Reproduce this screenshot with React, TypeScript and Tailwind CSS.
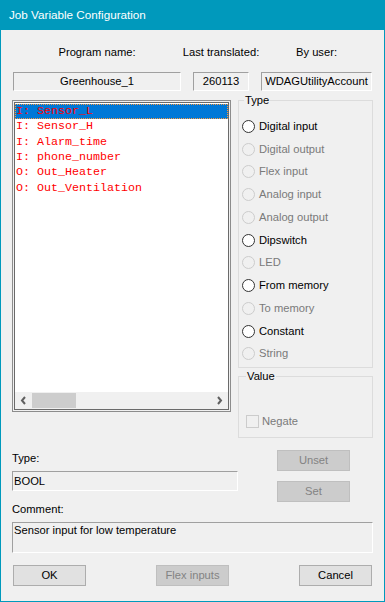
const items = [
  { label: "I: Sensor_L", selected: true },
  { label: "I: Sensor_H" },
  { label: "I: Alarm_time" },
  { label: "I: phone_number" },
  { label: "O: Out_Heater" },
  { label: "O: Out_Ventilation" },
];

const types = [
  { label: "Digital input", enabled: true },
  { label: "Digital output" },
  { label: "Flex input" },
  { label: "Analog input" },
  { label: "Analog output" },
  { label: "Dipswitch", enabled: true },
  { label: "LED" },
  { label: "From memory", enabled: true },
  { label: "To memory" },
  { label: "Constant", enabled: true },
  { label: "String" },
];

function Field({ width, children, center }: { width: string; children: React.ReactNode; center?: boolean }) {
  return (
    <div
      className={`${width} h-[19px] flex items-center border border-[#a0a0a0] border-r-white border-b-white leading-none ${
        center ? "justify-center" : "pl-px"
      }`}
    >
      {children}
    </div>
  );
}

function Button({ label, disabled }: { label: string; disabled?: boolean }) {
  return (
    <div
      className={`w-[73px] h-[21px] flex items-center justify-center border ${
        disabled ? "bg-[#cccccc] border-[#bfbfbf] text-[#838383]" : "bg-[#e1e1e1] border-[#adadad] text-black"
      }`}
    >
      {label}
    </div>
  );
}

function Chevron({ dir }: { dir: "left" | "right" }) {
  return (
    <svg width="17" height="15" viewBox="0 0 17 15">
      <path
        d={dir === "left" ? "M10 4 L7 7.5 L10 11" : "M7 4 L10 7.5 L7 11"}
        fill="none"
        stroke="#606060"
        strokeWidth="2"
      />
    </svg>
  );
}

export default function App() {
  return (
    <div className="w-[385px] h-[602px] flex flex-col border border-t-0 border-[#0099bc] bg-[#f0f0f0] text-[11.2px] text-black font-['Liberation_Sans',Arial,sans-serif]">
      <div className="h-[30px] shrink-0 flex items-center pl-[8px] bg-[#0099bc] text-white text-[11.7px]">
        Job Variable Configuration
      </div>

      <div className="flex flex-col px-[11px]">
        {/* header labels and read-only fields */}
        <div className="mt-[15px] h-[16px] flex items-center gap-[12px] pl-px leading-none">
          <div className="w-[168px] flex justify-center">Program name:</div>
          <div className="w-[56px] flex justify-center whitespace-nowrap">Last translated:</div>
          <div className="w-[111px] flex justify-center">By user:</div>
        </div>
        <div className="mt-[11px] flex gap-[12px] pl-px">
          <Field width="w-[168px]" center>Greenhouse_1</Field>
          <Field width="w-[56px]" center>260113</Field>
          <Field width="w-[111px]" center>WDAGUtilityAccount</Field>
        </div>

        {/* list and type options */}
        <div className="mt-[9px] flex gap-[7px]">
          <div className="w-[219px] h-[312px] border border-[#8c8c8c] p-px">
            <div className="h-full flex flex-col border border-[#6a6a6a] bg-white">
              <div className="flex-1 pt-px font-['Liberation_Mono','Courier_New',monospace] text-[11.67px] text-[#ff0000]">
                {items.map((it) => (
                  <div
                    key={it.label}
                    className={`h-[15.33px] flex items-center whitespace-pre ${
                      it.selected ? "bg-[#0078d7] border border-dotted border-[#ff9a3c] pl-0" : "pl-px"
                    }`}
                  >
                    {it.label}
                  </div>
                ))}
              </div>
              <div className="h-[17px] flex items-center bg-[#f0f0f0]">
                <Chevron dir="left" />
                <div className="flex-1 h-[15px]">
                  <div className="w-[44px] h-full bg-[#cdcdcd]" />
                </div>
                <Chevron dir="right" />
              </div>
            </div>
          </div>

          <div className="w-[135px] flex flex-col">
            <div className="relative h-[268px] border border-[#dcdcdc] pt-[14px] pl-[3px]">
              <span className="absolute -top-[9px] left-[5px] px-px bg-[#f0f0f0] leading-[16px]">Type</span>
              {types.map((t) => (
                <div key={t.label} className="h-[22.76px] flex items-center gap-[4px]">
                  <div
                    className={`w-[13px] h-[13px] rounded-full border ${
                      t.enabled ? "border-[#333333] bg-white" : "border-[#cccccc]"
                    }`}
                  />
                  <span className={t.enabled ? "text-black" : "text-[#7a7a7a]"}>{t.label}</span>
                </div>
              ))}
            </div>
            <div className="relative mt-[8px] h-[62px] border border-[#dcdcdc] flex items-end pl-[7px] pb-[7px]">
              <span className="absolute -top-[9px] left-[7px] px-px bg-[#f0f0f0] leading-[16px]">Value</span>
              <div className="flex items-center gap-[3px]">
                <div className="w-[13px] h-[13px] border border-[#cccccc]" />
                <span className="text-[#7a7a7a]">Negate</span>
              </div>
            </div>
          </div>
        </div>

        {/* type, comment and set buttons */}
        <div className="mt-[12px] flex">
          <div className="w-[226px] flex flex-col">
            <div className="h-[16px] leading-[16px]">Type:</div>
            <div className="mt-[5px] h-[20px] flex items-center pl-px border border-[#a0a0a0] border-r-white border-b-white">
              BOOL
            </div>
            <div className="mt-[10px] h-[16px] leading-[16px]">Comment:</div>
          </div>
          <div className="ml-[39px] flex flex-col gap-[10px]">
            <Button label="Unset" disabled />
            <Button label="Set" disabled />
          </div>
        </div>

        <div className="mt-[5px] h-[31px] pl-px border border-[#a0a0a0] border-r-white border-b-white leading-[14px]">
          Sensor input for low temperature
        </div>

        <div className="mt-[12px] flex justify-between px-px">
          <Button label="OK" />
          <Button label="Flex inputs" disabled />
          <Button label="Cancel" />
        </div>
      </div>
    </div>
  );
}
